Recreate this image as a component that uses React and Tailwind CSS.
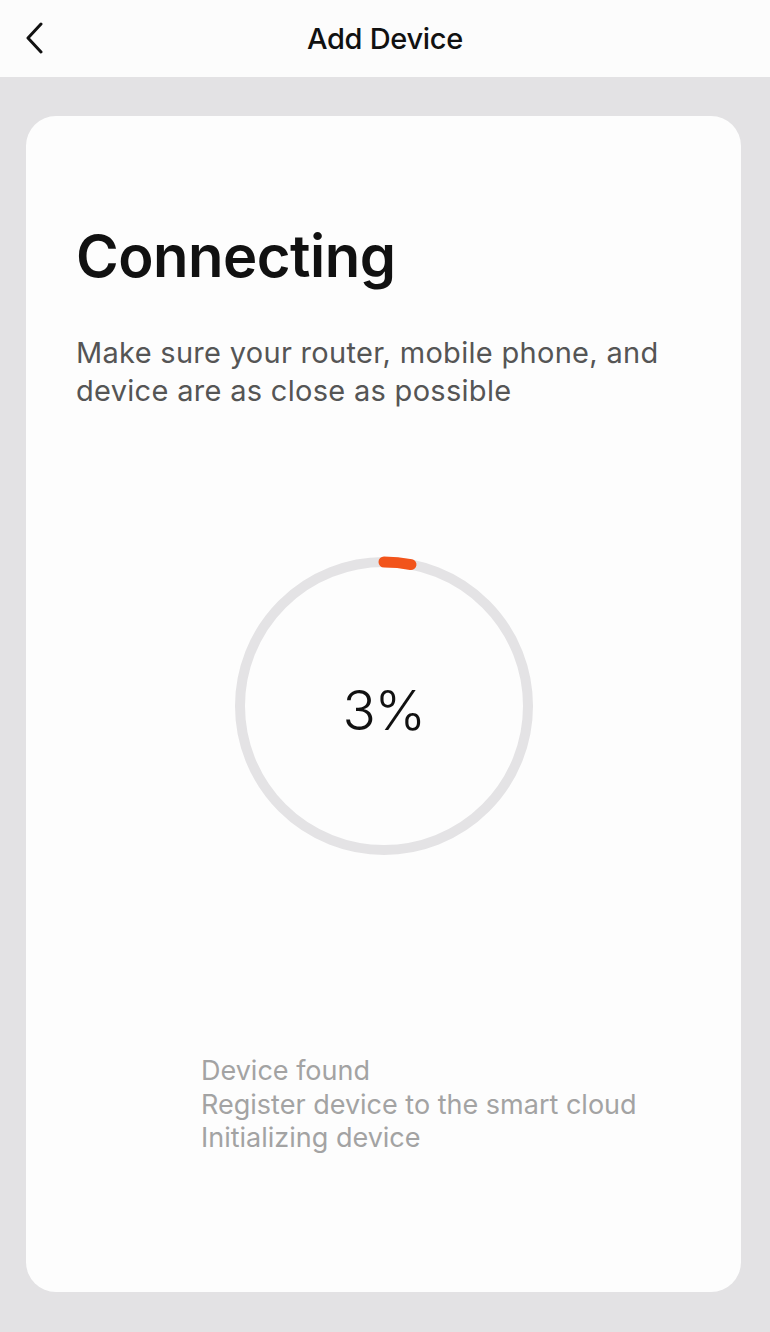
import React from "react";

const font = { fontFamily: "Inter, 'Noto Sans', sans-serif" };

const ProgressRing = ({ percent }) => {
  const r = 144;
  const c = 2 * Math.PI * r;
  const len = (c * percent) / 100;
  return (
    <div className="relative w-[300px] h-[300px]">
      <svg width="300" height="300" viewBox="0 0 300 300">
        <circle cx="150" cy="150" r={r} fill="none" stroke="#e4e3e5" strokeWidth="10" />
        <circle
          cx="150"
          cy="150"
          r={r}
          fill="none"
          stroke="#f2541b"
          strokeWidth="11"
          strokeLinecap="round"
          strokeDasharray={`${len} ${c}`}
          transform="rotate(-90 150 150)"
        />
      </svg>
      <div className="absolute inset-0 flex items-center justify-center">
        <span className="text-[55px] font-light text-[#111] tracking-tight pt-2">{percent}%</span>
      </div>
    </div>
  );
};

const App = () => {
  const steps = ["Device found", "Register device to the smart cloud", "Initializing device"];

  return (
    <div className="w-[770px] h-[1332px] flex flex-col bg-[#e3e2e4]" style={font}>
      <header className="h-[77px] bg-[#fcfcfc] relative flex items-center justify-center">
        <button className="absolute left-[20px] top-[20px] w-[28px] h-[36px] flex items-center justify-center">
          <svg width="20" height="32" viewBox="0 0 20 32" fill="none">
            <path d="M17 2 L4 16 L17 30" stroke="#111" strokeWidth="3" strokeLinecap="round" strokeLinejoin="round" />
          </svg>
        </button>
        <h1 className="text-[29px] font-medium text-[#111] tracking-[-0.3px]">Add Device</h1>
      </header>

      <main className="flex-1 pt-[39px] pl-[26px] pr-[29px] pb-[40px]">
        <div className="h-full bg-[#fdfdfd] rounded-[30px] flex flex-col pl-[50px] pr-[40px] pt-[104px]">
          <h2 className="text-[58px] font-semibold text-[#111] leading-[72px] tracking-[-0.5px]">Connecting</h2>
          <p className="mt-[42px] text-[29px] leading-[38px] tracking-[0.3px] text-[#555]">
            Make sure your router, mobile phone, and device are as close as possible
          </p>

          <div className="mt-[146px] flex justify-center pr-[10px]">
            <ProgressRing percent={3} />
          </div>

          <div className="mt-[198px] pl-[125px] flex flex-col">
            {steps.map((s) => (
              <span key={s} className="text-[27px] leading-[33.5px] text-[#a3a3a3]">
                {s}
              </span>
            ))}
          </div>
        </div>
      </main>
    </div>
  );
};

export default App;
